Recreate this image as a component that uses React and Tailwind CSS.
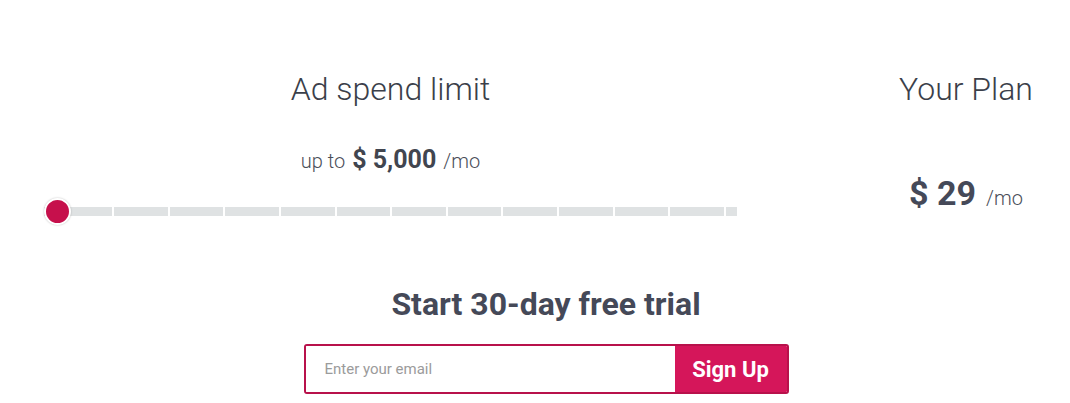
import React from "react";

const FONT = { fontFamily: "Roboto, 'Liberation Sans', sans-serif" };

function Slider() {
  const middle = Array.from({ length: 11 });
  return (
    <div className="relative h-[26px] w-[693px]">
      <div className="absolute left-0 right-0 top-[9px] flex h-[9px] gap-[2px]">
        <div className="w-[68px] bg-[#dfe2e3]" />
        {middle.map((_, i) => (
          <div key={i} className="flex-1 bg-[#dfe2e3]" />
        ))}
        <div className="w-[11px] bg-[#dfe2e3]" />
      </div>
      <div className="absolute left-0 top-0 h-[27px] w-[27px] rounded-full border-2 border-white bg-[#c6104c] shadow-[0_0_2px_rgba(0,0,0,0.25)]" />
    </div>
  );
}

export default function App() {
  return (
    <div className="h-[403px] w-[1070px] overflow-hidden bg-white" style={FONT}>
      <div className="grid grid-cols-[693px_200px] gap-x-[129px] pl-[44px] pt-[69px]">
        <div className="flex flex-col items-center">
          <div className="text-[32px] font-light leading-[40px] text-[#3b3f4a]">Ad spend limit</div>
          <div className="mt-[35px] flex items-baseline gap-[7px] leading-[32px] text-[#4a4e59]">
            <span className="text-[20px] font-light">up to</span>
            <span className="text-[25px] font-bold text-[#41454f]">$ 5,000</span>
            <span className="text-[20px] font-light">/mo</span>
          </div>
          <div className="mt-[21px] self-start">
            <Slider />
          </div>
        </div>
        <div className="flex flex-col items-center">
          <div className="text-[32px] font-light leading-[40px] text-[#3b3f4a]">Your Plan</div>
          <div className="mt-[64px] flex items-baseline gap-[10px] leading-[40px]">
            <span className="text-[34px] font-bold text-[#454958]">$ 29</span>
            <span className="text-[20px] font-light text-[#4a4e59]">/mo</span>
          </div>
        </div>
      </div>
      <div className="mt-[60px] flex flex-col items-center pl-[22px]">
        <div className="text-[32px] font-bold leading-[40px] text-[#454958]">Start 30-day free trial</div>
        <form className="mt-[20px] flex h-[50px] w-[485px] overflow-hidden rounded-[3px] border-2 border-[#b8114b]">
          <input
            type="email"
            placeholder="Enter your email"
            className="min-w-0 flex-1 bg-white pl-[19px] text-[15px] text-[#333] outline-none placeholder:text-[#9b9b9b]"
            style={FONT}
          />
          <button
            type="button"
            className="w-[112px] bg-[#d5165a] text-[22px] font-bold text-white"
            style={FONT}
          >
            Sign Up
          </button>
        </form>
      </div>
    </div>
  );
}
